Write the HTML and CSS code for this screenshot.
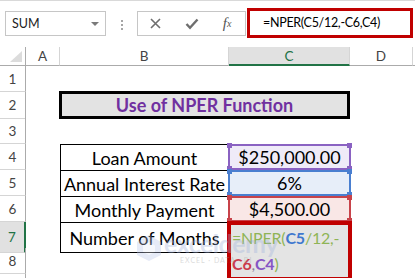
FILE: index.html
```html
<!DOCTYPE html>
<html lang="en">
<head>
    <meta charset="UTF-8">
    <title>Use of NPER Function</title>
    <link rel="stylesheet" href="styles.css">
</head>
<body>
    <div class="app">
        <div class="formula-bar">
            <div class="name-box"><span>SUM</span><span class="caret"></span></div>
            <div class="grip"><i></i><i></i><i></i></div>
            <div class="fx-buttons">
                <span class="fx-btn">
                    <svg width="11" height="11" viewBox="0 0 11 11"><path d="M1 1L10 10M10 1L1 10" stroke="#6e6e6e" stroke-width="1.6" fill="none"/></svg>
                </span>
                <span class="fx-btn">
                    <svg width="14" height="12" viewBox="0 0 14 12"><path d="M1.5 6L5 9.8L12.5 1.5" stroke="#6e6e6e" stroke-width="2.4" fill="none"/></svg>
                </span>
                <span class="fx-btn fx-label">f<sub>x</sub></span>
            </div>
            <div class="formula-input">=NPER(C5/12,-C6,C4)</div>
        </div>

        <div class="sheet">
            <div class="row col-heads">
                <div class="corner"><span class="select-all"></span></div>
                <div class="col-head">A</div>
                <div class="col-head">B</div>
                <div class="col-head active">C</div>
                <div class="col-head">D</div>
                <div class="col-head rest"></div>
            </div>
            <div class="row"><div class="row-head">1</div></div>
            <div class="row">
                <div class="row-head">2</div>
                <div></div>
                <div class="title">Use of NPER Function</div>
            </div>
            <div class="row"><div class="row-head">3</div></div>
            <div class="row">
                <div class="row-head">4</div>
                <div></div>
                <div class="label">Loan Amount</div>
                <div class="ref purple">$250,000.00<span class="h tl"></span><span class="h tr"></span><span class="h bl"></span><span class="h br"></span></div>
            </div>
            <div class="row">
                <div class="row-head">5</div>
                <div></div>
                <div class="label">Annual Interest Rate</div>
                <div class="ref blue">6%<span class="h tl"></span><span class="h tr"></span><span class="h bl"></span><span class="h br"></span></div>
            </div>
            <div class="row">
                <div class="row-head">6</div>
                <div></div>
                <div class="label">Monthly Payment</div>
                <div class="ref red">$4,500.00<span class="h tl"></span><span class="h tr"></span><span class="h bl"></span><span class="h br"></span></div>
            </div>
            <div class="row">
                <div class="row-head active">7</div>
                <div></div>
                <div class="label last">Number of Months</div>
                <div class="editor"><span class="fn">=NPER(</span><span class="c-blue">C5</span><span class="fn">/12,-</span><br><span class="c-red">C6</span><span class="sep">,</span><span class="c-purple">C4</span><span class="fn">)</span></div>
            </div>
            <div class="row"><div class="row-head">8</div></div>
            <div class="row"><div class="row-head"></div></div>
        </div>

        <div class="watermark">
            <svg width="26" height="28" viewBox="0 0 26 28">
                <polygon points="13,1 25,8 25,21 13,27 1,21 1,8" fill="#b9c7ea"/>
                <polygon points="13,8 19,11.5 19,18 13,21 7,18 7,11.5" fill="#e6ecf8"/>
            </svg>
            <div class="wm-text">
                <span class="wm-name">exceldemy</span>
                <span class="wm-tag">EXCEL · DATA · BI</span>
            </div>
        </div>
    </div>
</body>
</html>
```

FILE: styles.css
```css
body {
    margin: 0;
    font-family: Lato, "Liberation Sans", sans-serif;
    background: #fff;
    color: #000;
}

.app {
    position: relative;
    width: 415px;
    height: 278px;
    overflow: hidden;
}

/* formula bar */
.formula-bar {
    display: flex;
    align-items: flex-start;
    height: 46px;
    border-top: 1px solid #d9d9d9;
}

.name-box {
    display: flex;
    align-items: center;
    justify-content: space-between;
    box-sizing: border-box;
    width: 101px;
    height: 25px;
    margin: 10px 0 0 5px;
    padding: 0 6px;
    border: 1px solid #c6c6c6;
    font-size: 12.5px;
    color: #222;
}

.caret {
    width: 0;
    height: 0;
    border-left: 4px solid transparent;
    border-right: 4px solid transparent;
    border-top: 4px solid #7a7a7a;
}

.grip {
    display: flex;
    flex-direction: column;
    gap: 2px;
    margin: 19px 0 0 15px;
}

.grip i {
    width: 2px;
    height: 2px;
    background: #a6a6a6;
}

.fx-buttons {
    display: flex;
    align-items: center;
    box-sizing: border-box;
    width: 109px;
    height: 25px;
    margin: 10px 0 0 14px;
    border: 1px solid #c6c6c6;
}

.fx-btn {
    display: flex;
    align-items: center;
    justify-content: center;
    width: 36px;
    height: 100%;
}

.fx-label {
    font-family: "Liberation Serif", serif;
    font-style: italic;
    font-size: 15px;
    color: #555;
}

.fx-label sub {
    font-size: 10px;
    vertical-align: -2px;
}

.formula-input {
    box-sizing: border-box;
    width: 166px;
    height: 30px;
    margin: 7px 0 0 1px;
    padding-left: 13px;
    border: 3px solid #c00000;
    font-size: 12.5px;
    letter-spacing: -0.3px;
    line-height: 24px;
}

/* sheet grid */
.row {
    display: grid;
    grid-template-columns: 26px 34px 169px 121px 63px 1fr;
    height: 26px;
}

.col-heads {
    height: 19px;
}

.corner,
.col-head {
    box-sizing: border-box;
    border-right: 1px solid #d5d5d5;
    border-bottom: 1px solid #ababab;
}

.corner {
    display: flex;
    align-items: flex-end;
    justify-content: flex-end;
    padding: 0 3px 3px 0;
    border-right-color: #ababab;
}

.select-all {
    width: 0;
    height: 0;
    border-left: 12px solid transparent;
    border-bottom: 11px solid #dcdcdc;
}

.col-head {
    display: flex;
    align-items: center;
    justify-content: center;
    font-size: 13.5px;
    color: #444;
}

.col-head.active {
    background: #e1e1e1;
    border-bottom: 2px solid #217346;
    color: #217346;
}

.col-head.rest {
    border-right: none;
}

.row-head {
    display: flex;
    align-items: center;
    justify-content: center;
    box-sizing: border-box;
    border-right: 1px solid #ababab;
    border-bottom: 1px solid #d5d5d5;
    font-size: 13.5px;
    color: #444;
}

.row-head.active {
    background: #e1e1e1;
    border-right: 2px solid #217346;
    color: #217346;
}

.title {
    grid-column: span 2;
    display: flex;
    align-items: center;
    justify-content: center;
    box-sizing: border-box;
    margin: -1px 0 0 -1px;
    border: 3px solid #000;
    background: #e3e3e3;
    font-size: 18px;
    font-weight: bold;
    color: #7030a0;
}

.label {
    display: flex;
    align-items: center;
    justify-content: center;
    box-sizing: border-box;
    border: 1px solid #000;
    border-bottom: none;
    font-size: 18px;
}

.label.last {
    border-bottom: 1px solid #000;
}

.ref {
    position: relative;
    display: flex;
    align-items: center;
    justify-content: center;
    box-sizing: border-box;
    margin: 0 -1px;
    border: 2px solid;
    font-size: 18px;
}

.ref.purple { border-color: #8a62c2; background: #efebf8; }
.ref.blue { border-color: #4a7fd0; background: #e7eef9; }
.ref.red { border-color: #c8434a; background: #f9e7e6; }

.h {
    position: absolute;
    width: 5px;
    height: 5px;
}

.purple .h { background: #8a62c2; }
.blue .h { background: #4a7fd0; }
.red .h { background: #c8434a; }

.h.tl { top: -3px; left: -3px; }
.h.tr { top: -3px; right: -3px; }
.h.bl { bottom: -3px; left: -3px; }
.h.br { bottom: -3px; right: -3px; }

.editor {
    position: relative;
    z-index: 2;
    box-sizing: border-box;
    margin: -1px -2px -28px -2px;
    padding-left: 1px;
    border: 4px solid #c00000;
    background: #e4e4e4;
    font-size: 16px;
    letter-spacing: -0.2px;
    line-height: 26px;
    white-space: nowrap;
}

.editor .fn { color: #8fb456; }
.editor .sep { color: #8a7f99; }
.editor .c-blue { color: #3f78cf; font-weight: bold; }
.editor .c-red { color: #cc3b4c; font-weight: bold; }
.editor .c-purple { color: #8655c4; font-weight: bold; }

/* watermark */
.watermark {
    position: absolute;
    left: 136px;
    top: 231px;
    z-index: 3;
    display: flex;
    align-items: center;
    gap: 2px;
    opacity: 0.35;
    pointer-events: none;
}

.wm-text {
    display: flex;
    flex-direction: column;
    line-height: 1;
}

.wm-name {
    font-size: 25px;
    font-weight: bold;
    color: #9fb1dc;
    letter-spacing: -0.5px;
}

.wm-tag {
    margin: 1px 0 0 16px;
    font-size: 7px;
    letter-spacing: 1px;
    color: #999;
}
```
